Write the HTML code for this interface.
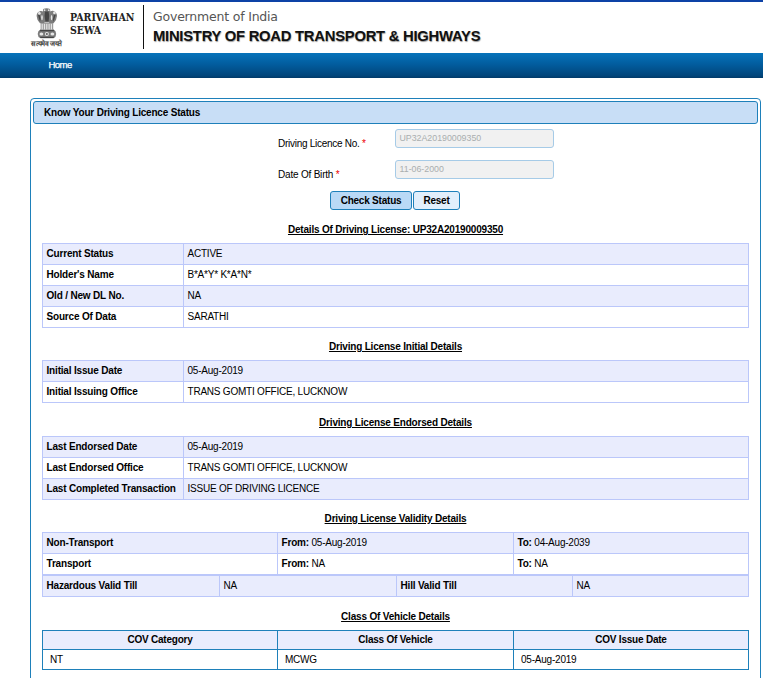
<!DOCTYPE html>
<html lang="en">
<head>
<meta charset="utf-8">
<title>Know Your Driving Licence Status</title>
<style>
*{box-sizing:border-box;margin:0;padding:0}
html,body{width:763px;height:678px;overflow:hidden;background:#fff}
body{position:relative;font-family:"Liberation Sans",sans-serif;font-size:10px;letter-spacing:-0.22px;color:#000}
.abs{position:absolute}
#topstrip{left:0;top:0;width:763px;height:2px;background:#0d42a6}
#emblem{left:28px;top:4px;width:40px;height:46px}
#sewa{left:70px;top:11px;font-family:"DejaVu Serif Condensed","DejaVu Serif","Liberation Serif",serif;font-weight:bold;font-size:10.5px;line-height:13.3px;color:#222;letter-spacing:-0.04px;white-space:nowrap}
#vbar{left:143px;top:5px;width:1px;height:44px;background:#111}
#goi{left:153px;top:8px;font-family:"DejaVu Sans","Liberation Sans",sans-serif;font-size:12.5px;line-height:18px;color:#555;white-space:nowrap;letter-spacing:-0.2px}
#ministry{left:153px;top:26px;font-family:"Liberation Sans",sans-serif;font-weight:bold;font-size:14.8px;line-height:21px;color:#111;white-space:nowrap;letter-spacing:-0.25px;text-shadow:.5px 1px 1px rgba(0,0,0,.4)}
#nav{left:0;top:53px;width:763px;height:25px;background:linear-gradient(#0673ba 0%,#025b9c 48%,#01467b 90%,#013b69 100%)}
#home{left:48.4px;top:58px;color:#fff;font-size:9.6px;line-height:13px;white-space:nowrap;letter-spacing:-0.55px;-webkit-text-stroke:0.25px #fff}
#panel{left:30px;top:98px;width:731px;height:600px;border:1px solid #1e80ba;border-radius:4px;background:#fff}
#phead{left:33px;top:101px;width:725px;height:23px;border:1px solid #1e80ba;border-radius:3px;background:#c8def6}
#ptitle{left:44px;top:106px;font-weight:bold;font-size:10px;line-height:13px;white-space:nowrap;letter-spacing:-0.2px}
.lbl{font-size:10px;line-height:13px;white-space:nowrap}
.req{color:#e00}
.inp{left:395px;width:159px;height:19px;border:1px solid #a6cbe7;border-radius:3px;background:#f1f1f1;color:#a9aeaf;font-size:8.8px;line-height:17px;padding-left:3.5px;white-space:nowrap;letter-spacing:0}
.btn{top:191px;height:19px;border:1px solid #1e80ba;border-radius:3px;font-weight:bold;font-size:10px;line-height:17px;text-align:center;white-space:nowrap}
.title{left:30px;width:731px;text-align:center;font-weight:bold;font-size:10px;line-height:13px;text-decoration:underline;white-space:nowrap;letter-spacing:-0.19px}
table{position:absolute;left:42px;width:707px;border-collapse:collapse;table-layout:fixed;font-size:10px}
td,th{height:21px;border:1px solid #bbc7fa;padding:0 0 2px 3.5px;vertical-align:middle;text-align:left;font-weight:normal;white-space:nowrap;overflow:hidden;line-height:13px}
td.b,td b{font-weight:bold;letter-spacing:-0.18px}
tr.s td{background:#e9ecfd}
table.cov td,table.cov th{border-color:#1e80ba}
table.cov th{background:#e9ecfd;font-weight:bold;text-align:center;padding:0 0 1px 0;height:19px}
table.cov td{padding:0 0 1px 7px;height:20px}
</style>
</head>
<body>
<div class="abs" id="topstrip"></div>

<svg class="abs" id="emblem" viewBox="28 4 40 46">
  <defs><filter id="bl" x="-10%" y="-10%" width="120%" height="120%"><feGaussianBlur stdDeviation="0.45"/></filter></defs>
  <g filter="url(#bl)">
    <g fill="#7c7c7c">
      <path d="M43.2 9 Q46.6 7.6 50 9 L50.6 13 L50 22.5 L43.4 22.5 L42.8 13 Z"/>
      <path d="M40.4 11 Q36.6 12.2 36.6 16 Q36.8 20 40 23.2 L44.4 23.2 L44.4 13 Q43 10.6 40.4 11 Z"/>
      <path d="M53 10.8 Q57 12 57 16 Q56.8 20 53.6 23.2 L49.2 23.2 L49.2 13 Q50.4 10.4 53 10.8 Z"/>
            <path d="M40.5 29.6 L53.5 29.6 Q56.2 31 56.2 34 Q56.2 37 53.5 38.2 L40.5 38.2 Q37.7 37 37.7 34 Q37.7 31 40.5 29.6 Z"/>
    </g>
    <g fill="#454545">
      <path d="M45 11.4 L48.6 11.4 L49.2 16 L48.6 21.6 L45.4 21.6 L44.6 16 Z"/>
      <path d="M38 15 L39.6 14.4 L40.6 19 L40 21.8 Z"/>
      <path d="M55.6 15 L54 14.4 L53 19 L53.6 21.8 Z"/>
      <path d="M40.5 29.8 L53.5 29.8 L54.6 31.2 L39.4 31.2 Z"/>
      <path d="M39.6 36.8 L54.4 36.8 L53.3 38 L40.7 38 Z"/>
    </g>
    <g fill="#9a9a9a"><rect x="40.6" y="23" width="12.6" height="7"/></g>
    <g fill="#e6e6e6">
      <rect x="41.6" y="23.8" width="1.2" height="5.6"/>
      <rect x="43.9" y="23.8" width="1.2" height="5.6"/>
      <rect x="46.2" y="23.8" width="1.2" height="5.6"/>
      <rect x="48.5" y="23.8" width="1.2" height="5.6"/>
      <rect x="50.8" y="23.8" width="1.2" height="5.6"/>
      <ellipse cx="39.4" cy="13.2" rx="1.3" ry="1.5"/>
      <ellipse cx="54.4" cy="12.8" rx="1.3" ry="1.5"/>
      <ellipse cx="42" cy="17.6" rx=".8" ry="2.6"/>
      <ellipse cx="51.6" cy="17.6" rx=".8" ry="2.6"/>
      <ellipse cx="44.6" cy="10.2" rx=".8" ry=".9"/>
      <ellipse cx="48.8" cy="10.2" rx=".8" ry=".9"/>
      <ellipse cx="41.4" cy="34" rx="1.9" ry="1.5"/>
      <ellipse cx="52.4" cy="34" rx="1.9" ry="1.5"/>
      <circle cx="46.9" cy="34" r="2"/>
    </g>
    <circle cx="46.9" cy="34" r="1" fill="#5a5a5a"/>
  </g>
  <text x="31.4" y="45.5" textLength="30.6" lengthAdjust="spacingAndGlyphs" font-family="'Liberation Sans',sans-serif" font-weight="bold" font-size="7" fill="#3c3c3c">सत्यमेव जयते</text>
</svg>

<div class="abs" id="sewa">PARIVAHAN<br>SEWA</div>
<div class="abs" id="vbar"></div>
<div class="abs" id="goi">Government of India</div>
<div class="abs" id="ministry">MINISTRY OF ROAD TRANSPORT &amp; HIGHWAYS</div>

<div class="abs" id="nav"></div>
<div class="abs" id="home">Home</div>

<div class="abs" id="panel"></div>
<div class="abs" id="phead"></div>
<div class="abs" id="ptitle">Know Your Driving Licence Status</div>

<div class="abs lbl" style="left:278px;top:137px;letter-spacing:-0.27px">Driving Licence No. <span class="req">*</span></div>
<div class="abs inp" style="top:129px">UP32A20190009350</div>
<div class="abs lbl" style="left:278px;top:168px;letter-spacing:-0.2px">Date Of Birth <span class="req">*</span></div>
<div class="abs inp" style="top:160px">11-06-2000</div>

<div class="abs btn" style="left:330px;width:82px;background:#b9d9f6">Check Status</div>
<div class="abs btn" style="left:413px;width:47px;background:#e2effb">Reset</div>

<div class="abs title" style="top:223px">Details Of Driving License: UP32A20190009350</div>
<table style="top:243px">
  <colgroup><col style="width:141px"><col></colgroup>
  <tr class="s"><td class="b">Current Status</td><td>ACTIVE</td></tr>
  <tr><td class="b">Holder's Name</td><td>B*A*Y* K*A*N*</td></tr>
  <tr class="s"><td class="b">Old / New DL No.</td><td>NA</td></tr>
  <tr><td class="b">Source Of Data</td><td>SARATHI</td></tr>
</table>

<div class="abs title" style="top:340px">Driving License Initial Details</div>
<table style="top:360px">
  <colgroup><col style="width:141px"><col></colgroup>
  <tr class="s"><td class="b">Initial Issue Date</td><td>05-Aug-2019</td></tr>
  <tr><td class="b">Initial Issuing Office</td><td>TRANS GOMTI OFFICE, LUCKNOW</td></tr>
</table>

<div class="abs title" style="top:416px">Driving License Endorsed Details</div>
<table style="top:436px">
  <colgroup><col style="width:141px"><col></colgroup>
  <tr class="s"><td class="b">Last Endorsed Date</td><td>05-Aug-2019</td></tr>
  <tr><td class="b">Last Endorsed Office</td><td>TRANS GOMTI OFFICE, LUCKNOW</td></tr>
  <tr class="s"><td class="b">Last Completed Transaction</td><td>ISSUE OF DRIVING LICENCE</td></tr>
</table>

<div class="abs title" style="top:512px">Driving License Validity Details</div>
<table style="top:532px">
  <colgroup><col style="width:235px"><col style="width:236px"><col></colgroup>
  <tr class="s"><td class="b">Non-Transport</td><td><b>From:</b> 05-Aug-2019</td><td><b>To:</b> 04-Aug-2039</td></tr>
  <tr><td class="b">Transport</td><td><b>From:</b> NA</td><td><b>To:</b> NA</td></tr>
</table>
<table style="top:575px">
  <colgroup><col style="width:177px"><col style="width:177px"><col style="width:176px"><col></colgroup>
  <tr class="s"><td class="b">Hazardous Valid Till</td><td>NA</td><td class="b">Hill Valid Till</td><td>NA</td></tr>
</table>

<div class="abs title" style="top:610px">Class Of Vehicle Details</div>
<table class="cov" style="top:630px">
  <colgroup><col style="width:235px"><col style="width:236px"><col></colgroup>
  <tr><th>COV Category</th><th>Class Of Vehicle</th><th>COV Issue Date</th></tr>
  <tr><td>NT</td><td>MCWG</td><td>05-Aug-2019</td></tr>
</table>
</body>
</html>
